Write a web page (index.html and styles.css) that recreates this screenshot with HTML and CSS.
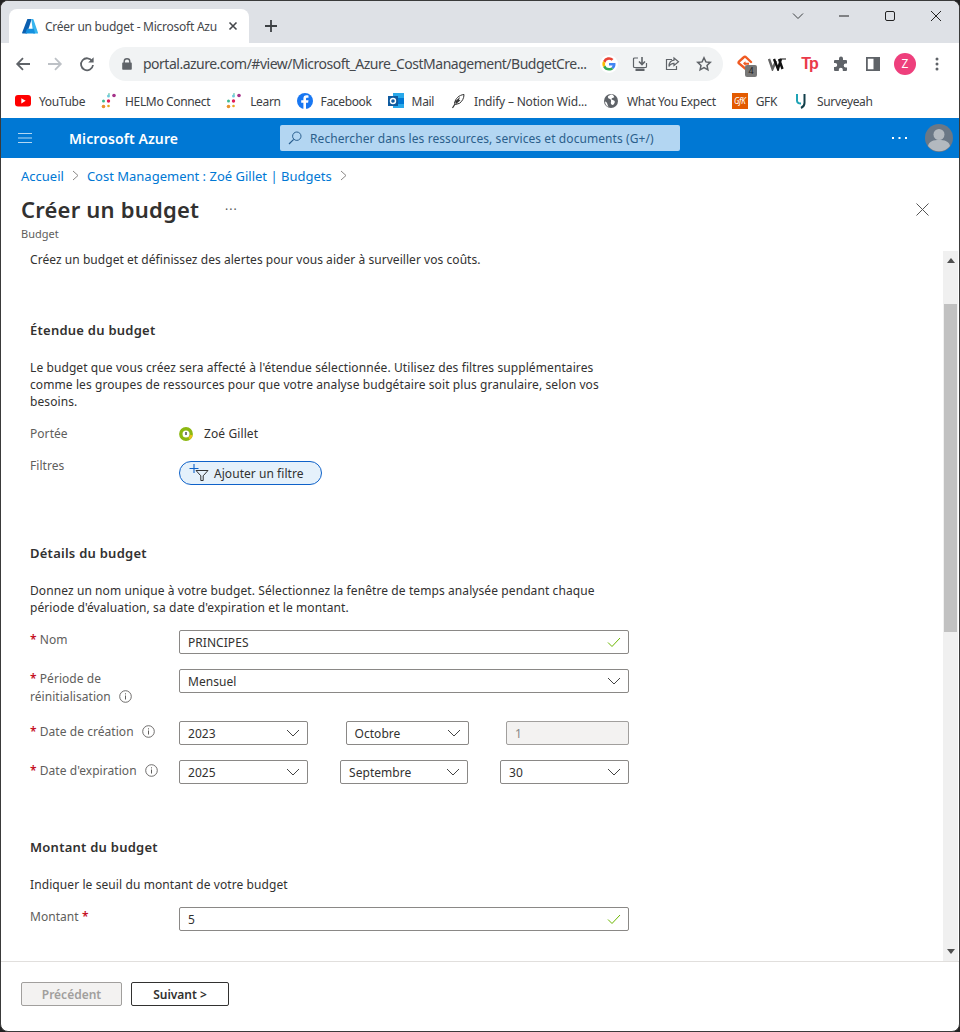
FILE: index.html
```html
<!DOCTYPE html>
<html lang="fr">
<head>
  <meta charset="UTF-8" />
  <meta name="viewport" content="width=device-width, initial-scale=1" />
  <title>Créer un budget - Microsoft Azure</title>
  <link rel="stylesheet" href="styles.css">
</head>
<body>
<div class="window">

  <div class="tabstrip">
    <div class="tab">
      <svg class="tab-logo" width="16" height="15" viewBox="0 0 16 15"><path fill="#0a5fb0" d="M5.4 0h4.3L5 14.6H.6a.6.6 0 0 1-.5-.8z"/><path fill="#37b4ee" d="M9.3 0h1.5c.4 0 .6.2.7.5L16 13.8a.6.6 0 0 1-.5.8h-4.3z"/><path fill="#1490df" d="M11.8 9.7H5l-1.6 4.9h9.8z"/></svg>
      <span class="tab-title">Créer un budget - Microsoft Azu</span>
      <svg width="10" height="10" viewBox="0 0 10 10"><path d="M1.5 1.5l7 7M8.5 1.5l-7 7" stroke="#45484c" stroke-width="1.6"/></svg>
    </div>
    <svg class="tab-new" width="14" height="14" viewBox="0 0 14 14"><path d="M7 1v12M1 7h12" stroke="#3c4043" stroke-width="1.8"/></svg>
    <div class="win-controls">
      <svg width="12" height="8" viewBox="0 0 12 8"><path d="M1 1.5l5 5 5-5" fill="none" stroke="#3c4043"/></svg>
      <svg width="12" height="2" viewBox="0 0 12 2"><path d="M1 1h10" stroke="#222" stroke-width="1"/></svg>
      <svg width="12" height="12" viewBox="0 0 12 12"><rect x="1.5" y="1.5" width="9" height="9" rx="1.5" fill="none" stroke="#222"/></svg>
      <svg width="12" height="12" viewBox="0 0 12 12"><path d="M1 1l10 10M11 1L1 11" stroke="#222"/></svg>
    </div>
  </div>

  <div class="toolbar">
    <svg class="tool-ico" width="16" height="16" viewBox="0 0 16 16"><path d="M15 8H2.5M8 2.2L2.2 8 8 13.8" fill="none" stroke="#5f6368" stroke-width="1.8"/></svg>
    <svg class="tool-ico" width="16" height="16" viewBox="0 0 16 16"><path d="M1 8h12.500M8 2.200L13.800 8 8 13.800" fill="none" stroke="#bdc1c6" stroke-width="1.800"/></svg>
    <svg class="tool-ico" width="16" height="16" viewBox="0 0 16 16"><path d="M13.200 5.200A6 6 0 1 0 14 9" fill="none" stroke="#5f6368" stroke-width="1.800"/><path fill="#5f6368" d="M14.600 1.200v5.400H9.200z"/></svg>
    <div class="omnibox">
      <svg width="10" height="12" viewBox="0 0 10 12"><path fill="#5f6368" d="M1.500 4.500V3.400a3.500 3.400 0 0 1 7 0v1.100h.3c.6 0 1 .4 1 1v5.300c0 .6-.4 1-1 1H1.200c-.6 0-1-.4-1-1V5.500c0-.6.4-1 1-1zm1.400 0h4.200V3.400a2.100 2 0 0 0-4.200 0z"/></svg>
      <span class="url">portal.azure.com/#view/Microsoft_Azure_CostManagement/BudgetCre...</span>
      <span class="omni-g">
        <svg width="14" height="14" viewBox="0 0 14 14"><path fill="#ea4335" d="M7 2.800c1 0 1.900.4 2.600 1l1.900-1.900A6.600 6.600 0 0 0 1.100 4l2.200 1.700A4 4 0 0 1 7 2.800z"/><path fill="#4285f4" d="M13.500 7.200c0-.5 0-.9-.1-1.300H7v2.500h3.600c-.2.800-.6 1.500-1.300 2l2.100 1.600c1.300-1.100 2.100-2.800 2.100-4.800z"/><path fill="#34a853" d="M7 13.600c1.800 0 3.300-.6 4.400-1.600l-2.100-1.600c-.6.400-1.400.7-2.300.7a4 4 0 0 1-3.700-2.700L1.100 10A6.600 6.600 0 0 0 7 13.600z"/><path fill="#fbbc05" d="M3.300 8.400a4 4 0 0 1 0-2.700L1.100 4a6.600 6.600 0 0 0 0 6z"/></svg>
      </span>
      <svg width="16" height="16" viewBox="0 0 16 16"><path d="M6 2H2.500a1 1 0 0 0-1 1v7.500a1 1 0 0 0 1 1h11a1 1 0 0 0 1-1V7" fill="none" stroke="#5f6368" stroke-width="1.200"/><path d="M10 1v7M7 5.500l3 3 3-3" fill="none" stroke="#5f6368" stroke-width="1.600"/><path fill="#5f6368" d="M3.500 12.500h9V15h-9z"/></svg>
      <svg width="16" height="16" viewBox="0 0 16 16"><path d="M8 3.500H2.500v10h10V10" fill="none" stroke="#5f6368" stroke-width="1.200"/><path d="M10 2l4.500 3.800L10 9.500V7.300C7.500 7.300 6 8.300 5 10.500c0-3.500 2-6 5-6.300z" fill="none" stroke="#5f6368" stroke-width="1.200"/></svg>
      <svg width="16" height="16" viewBox="0 0 16 16"><path d="M8 1.800l1.900 4.100 4.400.5-3.300 3 .9 4.400L8 11.600l-3.900 2.200.9-4.400-3.300-3 4.400-.5z" fill="none" stroke="#5f6368" stroke-width="1.500"/></svg>
    </div>
    <div class="extensions">
      <span class="ext-badge">
        <svg width="18" height="18" viewBox="0 0 18 18"><path d="M11 15l-8-6.500a1.500 1.500 0 0 1 0-2L7.500 2.500a2 2 0 0 1 2.800 0L15 7" fill="none" stroke="#f05a22" stroke-width="2.400" stroke-linecap="round"/><path fill="#f05a22" d="M7 8.200l2.500-2v1.500h3.500v2H9.500V11z"/></svg>
        <span class="badge">4</span>
      </span>
      <svg width="18" height="14" viewBox="0 0 18 14"><path d="M1 2l3.500 10L8 4" fill="none" stroke="#666" stroke-width="2.400"/><path d="M6 2l4 10 3-10M11 2l3.500 10" fill="none" stroke="#111" stroke-width="2.400"/><path d="M12 2h6" stroke="#111" stroke-width="1.200"/></svg>
      <span class="ext-tp">Tp</span>
      <svg width="16" height="16" viewBox="0 0 16 16"><path fill="#5f6368" d="M6 2.600a2 2 0 0 1 4 0V4h3a1 1 0 0 1 1 1v2.600h-1.300a2 2 0 0 0 0 4H14V14a1 1 0 0 1-1 1H9.800v-1.200a2 2 0 0 0-4 0V15H2a1 1 0 0 1-1-1v-3h1.200a2 2 0 0 0 0-4H1V5a1 1 0 0 1 1-1h4z"/></svg>
      <svg width="14" height="14" viewBox="0 0 14 14"><path fill="#5f6368" fill-rule="evenodd" d="M0 0h14v14H0zm1.800 1.800v10.400h5.700V1.800z"/></svg>
      <span class="avatar">Z</span>
      <svg width="4" height="14" viewBox="0 0 4 14"><circle cx="2" cy="2" r="1.500" fill="#5f6368"/><circle cx="2" cy="7" r="1.500" fill="#5f6368"/><circle cx="2" cy="12" r="1.500" fill="#5f6368"/></svg>
    </div>
  </div>

  <div class="bookmarks">
    <div class="bookmark">
      <svg width="16" height="12" viewBox="0 0 16 12"><rect width="16" height="11.500" rx="3" fill="#f00"/><path fill="#fff" d="M6.300 3.200l4.400 2.600-4.400 2.600z"/></svg>
      <span>YouTube</span>
    </div>
    <div class="bookmark">
      <svg width="16" height="16" viewBox="0 0 16 16"><circle cx="2.500" cy="8" r="1.500" fill="#3eb991"/><circle cx="2.500" cy="13.500" r="1.800" fill="#e8912d"/><circle cx="7.500" cy="8" r="1.700" fill="#e01e5a"/><circle cx="7.500" cy="3" r="1.500" fill="#6ecadc"/><circle cx="7.500" cy="13" r="1.300" fill="#e9a820"/><circle cx="13" cy="2.500" r="1.800" fill="#a6338a"/><circle cx="8" cy="1" r=".8" fill="#3eb991"/></svg>
      <span>HELMo Connect</span>
    </div>
    <div class="bookmark">
      <svg width="16" height="16" viewBox="0 0 16 16"><circle cx="2.500" cy="8" r="1.500" fill="#3eb991"/><circle cx="2.500" cy="13.500" r="1.800" fill="#e8912d"/><circle cx="7.500" cy="8" r="1.700" fill="#e01e5a"/><circle cx="7.500" cy="3" r="1.500" fill="#6ecadc"/><circle cx="7.500" cy="13" r="1.300" fill="#e9a820"/><circle cx="13" cy="2.500" r="1.800" fill="#a6338a"/><circle cx="8" cy="1" r=".8" fill="#3eb991"/></svg>
      <span>Learn</span>
    </div>
    <div class="bookmark">
      <svg width="16" height="16" viewBox="0 0 16 16"><circle cx="8" cy="8" r="8" fill="#1877f2"/><path fill="#fff" d="M9 16V9.800h2.100l.4-2.500H9V5.900c0-.7.300-1.200 1.300-1.200h1.200V2.500c-.5 0-1.200-.2-2-.2-2 0-3.100 1.200-3.100 3.300v1.700H4.200v2.500h2.200V16z"/></svg>
      <span>Facebook</span>
    </div>
    <div class="bookmark">
      <svg width="16" height="16" viewBox="0 0 16 16"><path fill="#28a8ea" d="M5 0h11v15H5z"/><path fill="#0078d4" d="M10 5h6v6h-6z"/><path fill="#0364b8" d="M5 5h5v5H5z"/><rect y="3" width="10" height="10" fill="#0f5a9f"/><circle cx="5" cy="8" r="2.500" fill="none" stroke="#fff" stroke-width="1.400"/></svg>
      <span>Mail</span>
    </div>
    <div class="bookmark">
      <svg width="16" height="16" viewBox="0 0 16 16"><path fill="#fff" stroke="#333" d="M14 1.500C9 2 5.500 5.500 4.500 10l1 1.500 4-1.200C12 8.500 14 5.500 14 1.500z"/><path fill="#333" d="M5 8.500L10 4l-1 3 1.500.3L6 11z"/><path d="M5 11l-2.500 4" stroke="#333" stroke-width="1.200"/></svg>
      <span class="bookmark-wide">Indify – Notion Wid...</span>
    </div>
    <div class="bookmark">
      <svg width="16" height="16" viewBox="0 0 16 16"><circle cx="8" cy="8" r="7" fill="#5f6368"/><path fill="#fff" d="M8 1.500c-1.500 1-3.500 1.200-3 3s2.500 1 3 2.500-1 3 .5 4.500 3-1 3.300-2.500-1.800-2-3-2.500 1-2 2.500-2.300C10.500 1.800 9 1.500 8 1.500zM2 8.500c1.200.2 2 1 2.300 2.300S5 13 5.500 14A6.500 6.500 0 0 1 2 8.500z"/></svg>
      <span>What You Expect</span>
    </div>
    <div class="bookmark">
      <span class="gfk-logo">GfK</span>
      <span>GFK</span>
    </div>
    <div class="bookmark">
      <svg width="16" height="16" viewBox="0 0 16 16"><path d="M4 1v6.500C4 9.500 5 10.500 8 10.500" fill="none" stroke="#1fa3b5" stroke-width="2"/><path d="M11.500 1v9c0 2.500-1.500 4-3.500 5" fill="none" stroke="#123f4a" stroke-width="2"/></svg>
      <span>Surveyeah</span>
    </div>
  </div>

  <div class="azure-bar">
    <svg width="14" height="10" viewBox="0 0 14 10"><path d="M0 .5h14M0 5h14M0 9.500h14" stroke="#b3d7f2" stroke-width="1.100"/></svg>
    <span class="brand">Microsoft Azure</span>
    <div class="search">
      <svg width="14" height="14" viewBox="0 0 14 14"><circle cx="8.800" cy="5.200" r="4.200" fill="none" stroke="#2a5f8f"/><path d="M5.700 8.300L1 13" stroke="#2a5f8f" stroke-width="1.200"/></svg>
      <span>Rechercher dans les ressources, services et documents (G+/)</span>
    </div>
    <svg class="bar-more" width="15" height="2" viewBox="0 0 15 2"><path fill="#fff" d="M0 0h2v2H0zM6.500 0h2v2h-2zM13 0h2v2h-2z"/></svg>
    <svg class="user" width="28" height="28" viewBox="0 0 28 28"><circle cx="14" cy="14" r="14" fill="#6b7886"/><circle cx="14" cy="10.500" r="5.500" fill="#b3b9bf"/><path fill="#b3b9bf" d="M3 22c1-5 5.500-6 11-6s10 1 11 6a14 14 0 0 1-22 0z"/></svg>
  </div>

  <div class="page">
    <nav class="crumbs">
      <a>Accueil</a>
      <svg width="7" height="11" viewBox="0 0 7 11"><path d="M1 1l5 4.500L1 10" fill="none" stroke="#8a8886"/></svg>
      <a>Cost Management : Zoé Gillet | Budgets</a>
      <svg width="7" height="11" viewBox="0 0 7 11"><path d="M1 1l5 4.500L1 10" fill="none" stroke="#8a8886"/></svg>
    </nav>
    <div class="title-row">
      <h1>Créer un budget</h1>
      <span class="title-more">···</span>
      <svg class="close" width="13" height="13" viewBox="0 0 13 13"><path d="M.5.500l12 12M12.500.500l-12 12" stroke="#555" stroke-width="1"/></svg>
    </div>
    <div class="subtitle">Budget</div>

    <div class="pane">
      <div class="pane-body">
        <p class="intro">Créez un budget et définissez des alertes pour vous aider à surveiller vos coûts.</p>

        <h2 class="h-scope">Étendue du budget</h2>
        <p class="desc">Le budget que vous créez sera affecté à l'étendue sélectionnée. Utilisez des filtres supplémentaires comme les groupes de ressources pour que votre analyse budgétaire soit plus granulaire, selon vos besoins.</p>

        <div class="row row-scope">
          <div class="label label-flat">Portée</div>
          <div class="value">
            <svg width="14" height="14" viewBox="0 0 14 14"><circle cx="7" cy="7" r="5.200" fill="#fff" stroke="#8cb811" stroke-width="3.400"/><path d="M10 11.500A5.500 5.500 0 0 0 12.500 8" fill="none" stroke="#ecc21b" stroke-width="2.400"/><path d="M7 5v3" stroke="#333" stroke-width="1.300"/></svg>
            <span>Zoé Gillet</span>
          </div>
        </div>
        <div class="row row-filter">
          <div class="label label-flat">Filtres</div>
          <button class="filter-btn">
            <svg width="22" height="20" viewBox="0 0 22 20"><path d="M5 1v9M.5 5.500h9" stroke="#0f62c9" stroke-width="1.100"/><path d="M7 7.500h12l-4.800 5.300v4.700h-2.400v-4.700z" fill="none" stroke="#333" stroke-width="1"/></svg>
            <span>Ajouter un filtre</span>
          </button>
        </div>

        <h2 class="h-details">Détails du budget</h2>
        <p class="desc">Donnez un nom unique à votre budget. Sélectionnez la fenêtre de temps analysée pendant chaque période d'évaluation, sa date d'expiration et le montant.</p>

        <div class="row row-name">
          <div class="label"><span class="req">*</span> <span>Nom</span></div>
          <div class="field">
            <span>PRINCIPES</span>
            <svg width="14" height="11" viewBox="0 0 14 11"><path d="M1 5.500l4 4L13 1" fill="none" stroke="#6bb700" stroke-width="1"/></svg>
          </div>
        </div>
        <div class="row row-period">
          <div class="label"><span class="req">*</span> <span>Période de</span><br><span>réinitialisation</span>
            <svg class="info" width="13" height="13" viewBox="0 0 13 13"><circle cx="6.500" cy="6.500" r="5.800" fill="none" stroke="#605e5c" stroke-width=".9"/><path d="M6.500 5.500v4M6.500 3.300v1.100" stroke="#605e5c"/></svg>
          </div>
          <div class="field">
            <span>Mensuel</span>
            <svg width="14" height="8" viewBox="0 0 14 8"><path d="M1 1l6 6 6-6" fill="none" stroke="#444"/></svg>
          </div>
        </div>
        <div class="row row-date">
          <div class="label"><span class="req">*</span> <span>Date de création</span>
            <svg class="info" width="13" height="13" viewBox="0 0 13 13"><circle cx="6.500" cy="6.500" r="5.800" fill="none" stroke="#605e5c" stroke-width=".9"/><path d="M6.500 5.500v4M6.500 3.300v1.100" stroke="#605e5c"/></svg>
          </div>
          <div class="date-fields">
            <div class="field w-year"><span>2023</span><svg width="14" height="8" viewBox="0 0 14 8"><path d="M1 1l6 6 6-6" fill="none" stroke="#444"/></svg></div>
            <div class="field w-month"><span>Octobre</span><svg width="14" height="8" viewBox="0 0 14 8"><path d="M1 1l6 6 6-6" fill="none" stroke="#444"/></svg></div>
            <div class="field w-month field-off"><span>1</span></div>
          </div>
        </div>
        <div class="row row-date2">
          <div class="label"><span class="req">*</span> <span>Date d'expiration</span>
            <svg class="info" width="13" height="13" viewBox="0 0 13 13"><circle cx="6.500" cy="6.500" r="5.800" fill="none" stroke="#605e5c" stroke-width=".9"/><path d="M6.500 5.500v4M6.500 3.300v1.100" stroke="#605e5c"/></svg>
          </div>
          <div class="date-fields">
            <div class="field w-year"><span>2025</span><svg width="14" height="8" viewBox="0 0 14 8"><path d="M1 1l6 6 6-6" fill="none" stroke="#444"/></svg></div>
            <div class="field w-month2"><span>Septembre</span><svg width="14" height="8" viewBox="0 0 14 8"><path d="M1 1l6 6 6-6" fill="none" stroke="#444"/></svg></div>
            <div class="field w-year"><span>30</span><svg width="14" height="8" viewBox="0 0 14 8"><path d="M1 1l6 6 6-6" fill="none" stroke="#444"/></svg></div>
          </div>
        </div>

        <h2 class="h-amount">Montant du budget</h2>
        <p class="desc">Indiquer le seuil du montant de votre budget</p>

        <div class="row row-amount">
          <div class="label"><span>Montant</span> <span class="req">*</span></div>
          <div class="field">
            <span>5</span>
            <svg width="14" height="11" viewBox="0 0 14 11"><path d="M1 5.500l4 4L13 1" fill="none" stroke="#6bb700" stroke-width="1"/></svg>
          </div>
        </div>
      </div>

      <div class="scrollbar">
        <svg width="8" height="5" viewBox="0 0 8 5"><path fill="#505050" d="M4 0l4 5H0z"/></svg>
        <div class="thumb-track"><div class="thumb"></div></div>
        <svg width="8" height="5" viewBox="0 0 8 5"><path fill="#505050" d="M4 5l4-5H0z"/></svg>
      </div>
    </div>

    <div class="footer">
      <button class="btn btn-off">Précédent</button>
      <button class="btn">Suivant &gt;</button>
    </div>
  </div>

</div>
</body>
</html>
```

FILE: styles.css
```css
html, body { margin: 0; height: 100%; background: #222; }
body { font-family: "Noto Sans", "Open Sans", Arial, sans-serif; font-size: 12px; color: #323130; overflow: hidden; }
svg { flex: none; display: block; }

.window { box-sizing: border-box; height: 1032px; border: 1px solid #3a3a3a; border-radius: 8px; overflow: hidden; background: #fff; display: flex; flex-direction: column; }

/* browser chrome */
.tabstrip { height: 42px; background: #dee1e6; display: flex; align-items: flex-end; padding-left: 8px; flex: none; position: relative; }
.tab { width: 240px; height: 34px; box-sizing: border-box; background: #fff; border-radius: 8px 8px 0 0; display: flex; align-items: center; padding: 0 11px 0 13px; color: #45484c; }
.tab-title { margin-left: 7px; flex: 1; white-space: nowrap; overflow: hidden; letter-spacing: -.25px; }
.tab-new { margin: 0 0 10px 15px; }
.win-controls { position: absolute; top: 9px; right: 17px; display: flex; align-items: center; gap: 34px; }

.toolbar { height: 41px; display: flex; align-items: center; flex: none; padding-left: 14px; }
.toolbar .tool-ico { margin-right: 16px; }
.omnibox { width: 614px; height: 34px; margin-left: -2px; box-sizing: border-box; background: #f1f3f4; border-radius: 17px; display: flex; align-items: center; padding-left: 13px; gap: 16px; }
.url { font-size: 14px; color: #45484c; width: 447px; margin-left: -5px; margin-right: -4px; white-space: nowrap; letter-spacing: -.5px; }
.omni-g { width: 18px; height: 18px; margin: 0 -2px; border-radius: 50%; background: #fff; display: flex; align-items: center; justify-content: center; }
.extensions { display: grid; grid-template-columns: repeat(7, 32px); justify-items: center; align-items: center; margin-left: 6px; }
.ext-badge { position: relative; display: block; width: 18px; height: 18px; }
.badge { position: absolute; left: 9px; top: 10px; width: 12px; height: 12px; border-radius: 2px; background: #777; color: #222; font-size: 9px; line-height: 12px; text-align: center; }
.ext-tp { font: bold 16px "Liberation Sans", sans-serif; color: #ea3a4a; letter-spacing: -2px; }
.avatar { width: 22px; height: 22px; border-radius: 50%; background: #ee3f7c; color: #fff; font-size: 12px; line-height: 22px; text-align: center; }

.bookmarks { height: 34px; display: flex; align-items: center; flex: none; padding-left: 14px; gap: 16px; color: #3c4043; }
.bookmark { display: flex; align-items: center; gap: 8px; letter-spacing: -.35px; white-space: nowrap; }
.bookmark-wide { letter-spacing: -.2px; }
.gfk-logo { width: 16px; height: 16px; background: #e35a00; color: #fff; font-size: 8px; font-style: italic; line-height: 16px; text-align: center; letter-spacing: -.3px; }

/* azure header */
.azure-bar { height: 40px; background: #0078d4; display: flex; align-items: center; flex: none; padding-left: 17px; position: relative; }
.brand { color: #fff; font-size: 14px; font-weight: 600; margin-left: 37px; width: 211px; letter-spacing: .1px; }
.search { width: 400px; height: 26px; box-sizing: border-box; background: #b3d6f2; border-radius: 2px; display: flex; align-items: center; padding-left: 8px; gap: 8px; color: #2b5f8c; letter-spacing: .08px; white-space: nowrap; }
.bar-more { margin-left: 212px; }
.user { margin-left: 18px; }

/* page head */
.page { flex: 1; display: flex; flex-direction: column; min-height: 0; }
.crumbs { display: flex; align-items: center; gap: 8px; padding: 8px 0 0 20px; height: 19px; }
.crumbs a { color: #0078d4; font-size: 13px; }
.title-row { display: flex; align-items: center; padding: 8px 30px 0 20px; height: 32px; }
h1 { margin: 0; font-size: 22px; font-weight: 600; color: #323130; letter-spacing: .2px; }
.title-more { margin-left: 26px; color: #555; font-size: 12px; letter-spacing: 1px; }
.close { margin-left: auto; }
.subtitle { padding-left: 20px; font-size: 11px; color: #605e5c; line-height: 16px; margin-top: 1px; }

/* scrolling pane */
.pane { flex: 1; min-height: 0; display: flex; overflow: hidden; margin-top: 9px; }
.pane-body { flex: 1; padding: 0 0 0 29px; min-width: 0; }
.pane-body p, .pane-body h2 { width: 600px; margin: 0; }
.intro { line-height: 17px; letter-spacing: .05px; }
h2 { font-size: 13px; font-weight: 600; line-height: 18px; letter-spacing: .25px; }
.desc { line-height: 17px; letter-spacing: .09px; }
.pane-body .h-scope { margin-top: 53px; margin-bottom: 20px; }
.pane-body .h-details { margin-top: 59px; margin-bottom: 20px; }
.pane-body .h-amount { margin-top: 54px; margin-bottom: 20px; }

.row { display: flex; width: 599px; }
.label { width: 149px; flex: none; color: #605e5c; line-height: 18px; letter-spacing: .05px; padding: 1px 14px 0 0; box-sizing: border-box; }
.label-flat { padding-top: 0; }
.info { display: inline-block; margin-left: 5px; vertical-align: -2px; }
.req { color: #c50f1f; font-weight: 600; }
.value { display: flex; align-items: center; gap: 11px; color: #323130; height: 17px; letter-spacing: .1px; }
.row-scope { margin-top: 15px; }
.row-filter { margin-top: 14px; }
.row-name { margin-top: 14px; }
.row-period { margin-top: 15px; }
.row-date { margin-top: 15px; }
.row-date2 { margin-top: 15px; }
.row-date .label, .row-date2 .label { padding-top: 2px; }
.row-amount { margin-top: 14px; }

.filter-btn { margin: 4px 0 0 0; height: 24px; width: 143px; box-sizing: border-box; display: flex; align-items: center; gap: 3px; padding: 0 0 0 9px; background: #e5f1fb; border: 1px solid #0f62c9; border-radius: 12px; font: inherit; color: #323130; letter-spacing: .05px; }

.field { box-sizing: border-box; height: 24px; width: 450px; display: flex; align-items: center; justify-content: space-between; padding: 0 7px 0 8px; border: 1px solid #8a8886; border-radius: 2px; color: #323130; background: #fff; letter-spacing: .05px; }
.date-fields { width: 450px; display: flex; justify-content: space-between; }
.w-year { width: 129px; }
.w-month { width: 123px; }
.w-month2 { width: 128px; }
.field-off { background: #f3f2f1; border-color: #a19f9d; color: #8a8886; }

/* scrollbar */
.scrollbar { width: 15px; margin-right: 1px; flex: none; background: #f0f0f0; display: flex; flex-direction: column; align-items: center; padding: 7px 0; box-sizing: border-box; height: 100%; }
.thumb-track { flex: 1; width: 100%; padding-top: 41px; box-sizing: border-box; }
.thumb { height: 328px; width: 13px; margin-left: 1px; background: #c1c1c1; }

/* footer */
.footer { flex: none; height: 70px; box-sizing: border-box; border-top: 1px solid #e1dfdd; display: flex; align-items: flex-start; gap: 9px; padding: 20px 0 0 20px; }
.btn { height: 24px; width: 98px; box-sizing: border-box; background: #fff; border: 1px solid #323130; border-radius: 2px; font: 600 12px "Noto Sans", sans-serif; color: #323130; padding: 0; }
.btn-off { width: 101px; background: #f3f2f1; border-color: #a19f9d; color: #a19f9d; }
```
